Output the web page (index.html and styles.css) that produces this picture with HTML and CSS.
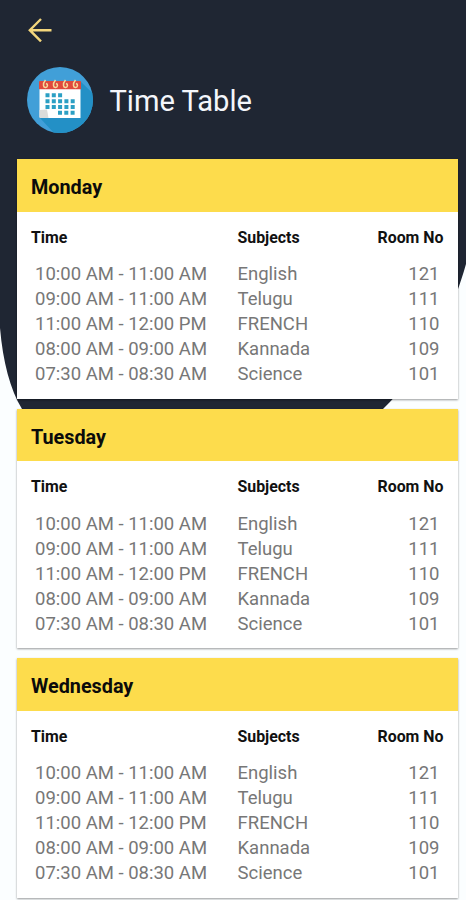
FILE: index.html
```
<!DOCTYPE html>
<html lang="en">
<head>
  <meta charset="UTF-8">
  <title>Time Table</title>
  <meta name="viewport" content="width=device-width, initial-scale=1.0">
  <link rel="stylesheet" href="styles.css">
  <script defer src="script.js"></script>
</head>
<body>
  <svg class="backdrop" viewBox="0 0 466 420" aria-hidden="true">
    <path d="M0 0H466V264C463 275 460 283 457 292C444 330 420 373 383 409L370 420H29L22 409C10 389 3 362 0 328Z" fill="#1f2633"/>
  </svg>

  <div class="screen">
    <a class="back" href="#" aria-label="Back">
      <svg width="24" height="24" viewBox="0 0 24 24" fill="none" stroke="#f3d67c" stroke-width="2.4">
        <path d="M23.5 12.2H2M13 1L1.8 12.2L13 23.4"/>
      </svg>
    </a>

    <header class="heading">
      <svg class="logo" width="66" height="66" viewBox="0 0 66 66">
        <defs>
          <clipPath id="disc"><circle cx="33" cy="33" r="33"/></clipPath>
        </defs>
        <circle cx="33" cy="33" r="33" fill="#419fd8"/>
        <path d="M53 14L80 40V80H40L13 51Z" fill="#2390c6" clip-path="url(#disc)"/>
        <path d="M12.5 22H53.5V51H21L12.5 50Z" fill="#fff"/>
        <path d="M12.5 43L20 42.5L21.5 51H12.5Z" fill="#dcdcda"/>
        <path d="M12 22.3V15Q12 14 13 14H53Q54 14 54 15V22.3Z" fill="#e04a3c"/>
        <g fill="none" stroke="#f6dc9a" stroke-width="1.5">
          <path d="M18.5 13Q16 16 16.5 18.5A2 2 0 1 0 19 16.5"/>
          <path d="M28.5 13Q26 16 26.5 18.5A2 2 0 1 0 29 16.5"/>
          <path d="M38.5 13Q36 16 36.5 18.5A2 2 0 1 0 39 16.5"/>
          <path d="M48.500 13Q46 16 46.5 18.5A2 2 0 1 0 49 16.5"/>
        </g>
        <path d="M18.5 28.3H35.5M18.5 34.2H48.5M18.5 40H48.5M31 45.7H48.5" stroke="#2b9fc4" stroke-width="4" stroke-dasharray="4 2.3"/>
      </svg>
      <h1 class="title">Time Table</h1>
    </header>

    <main class="days" id="days"></main>
  </div>
</body>
</html>
```
FILE: styles.css
```
body {
  margin: 0;
  background: #fbfeff;
  font-family: Roboto, "Liberation Sans", sans-serif;
  color: #0b0b0b;
}

.backdrop {
  position: absolute;
  top: 0;
  left: 0;
  width: 466px;
  height: 420px;
}

.screen {
  position: relative;
  height: 900px;
  overflow: hidden;
}

.back {
  display: block;
  width: 24px;
  height: 24px;
  padding: 18px 0 0 28px;
}

.heading {
  display: flex;
  align-items: center;
  gap: 17px;
  padding: 25px 0 0 26.5px;
}

.logo {
  flex: none;
}

.title {
  margin: 0;
  padding-top: 2px;
  color: #f4f6fb;
  font-size: 29.1px;
  font-weight: 400;
  line-height: 34px;
}

.days {
  display: grid;
  gap: 10px;
  padding: 26px 8.5px 0 17px;
}

.day {
  height: 239.7px;
  background: #fff;
  box-shadow: 0 1px 2px rgba(0, 0, 0, 0.4);
}

.day-name {
  box-sizing: border-box;
  height: 52.5px;
  margin: 0;
  padding: 4px 14px 0;
  background: #fddc4c;
  font-size: 19.8px;
  font-weight: 700;
  line-height: 50px;
}

.row {
  display: grid;
  grid-template-columns: 203px 1fr 62px;
  padding: 0 18px;
  color: #777;
  font-size: 18.5px;
  line-height: 25px;
}

.row .subject {
  margin-left: -0.5px;
}

.row .room {
  text-align: right;
}

.row.labels {
  grid-template-columns: 206.5px 1fr auto;
  padding: 13px 14px 12.4px;
  color: #111;
  font-size: 15.9px;
  font-weight: 700;
}
```
FILE: script.js
```
const days = ["Monday", "Tuesday", "Wednesday"];

const lessons = [
  ["10:00 AM - 11:00 AM", "English", 121],
  ["09:00 AM - 11:00 AM", "Telugu", 111],
  ["11:00 AM - 12:00 PM", "FRENCH", 110],
  ["08:00 AM - 09:00 AM", "Kannada", 109],
  ["07:30 AM - 08:30 AM", "Science", 101]
];

const rows = lessons.map(([time, subject, room]) => `
  <div class="row">
    <span>${time}</span>
    <span class="subject">${subject}</span>
    <span class="room">${room}</span>
  </div>`
).join("");

document.getElementById("days").innerHTML = days.map(day => `
  <section class="day">
    <h2 class="day-name">${day}</h2>
    <div class="row labels">
      <span>Time</span>
      <span>Subjects</span>
      <span>Room No</span>
    </div>
    ${rows}
  </section>`
).join("");
```
